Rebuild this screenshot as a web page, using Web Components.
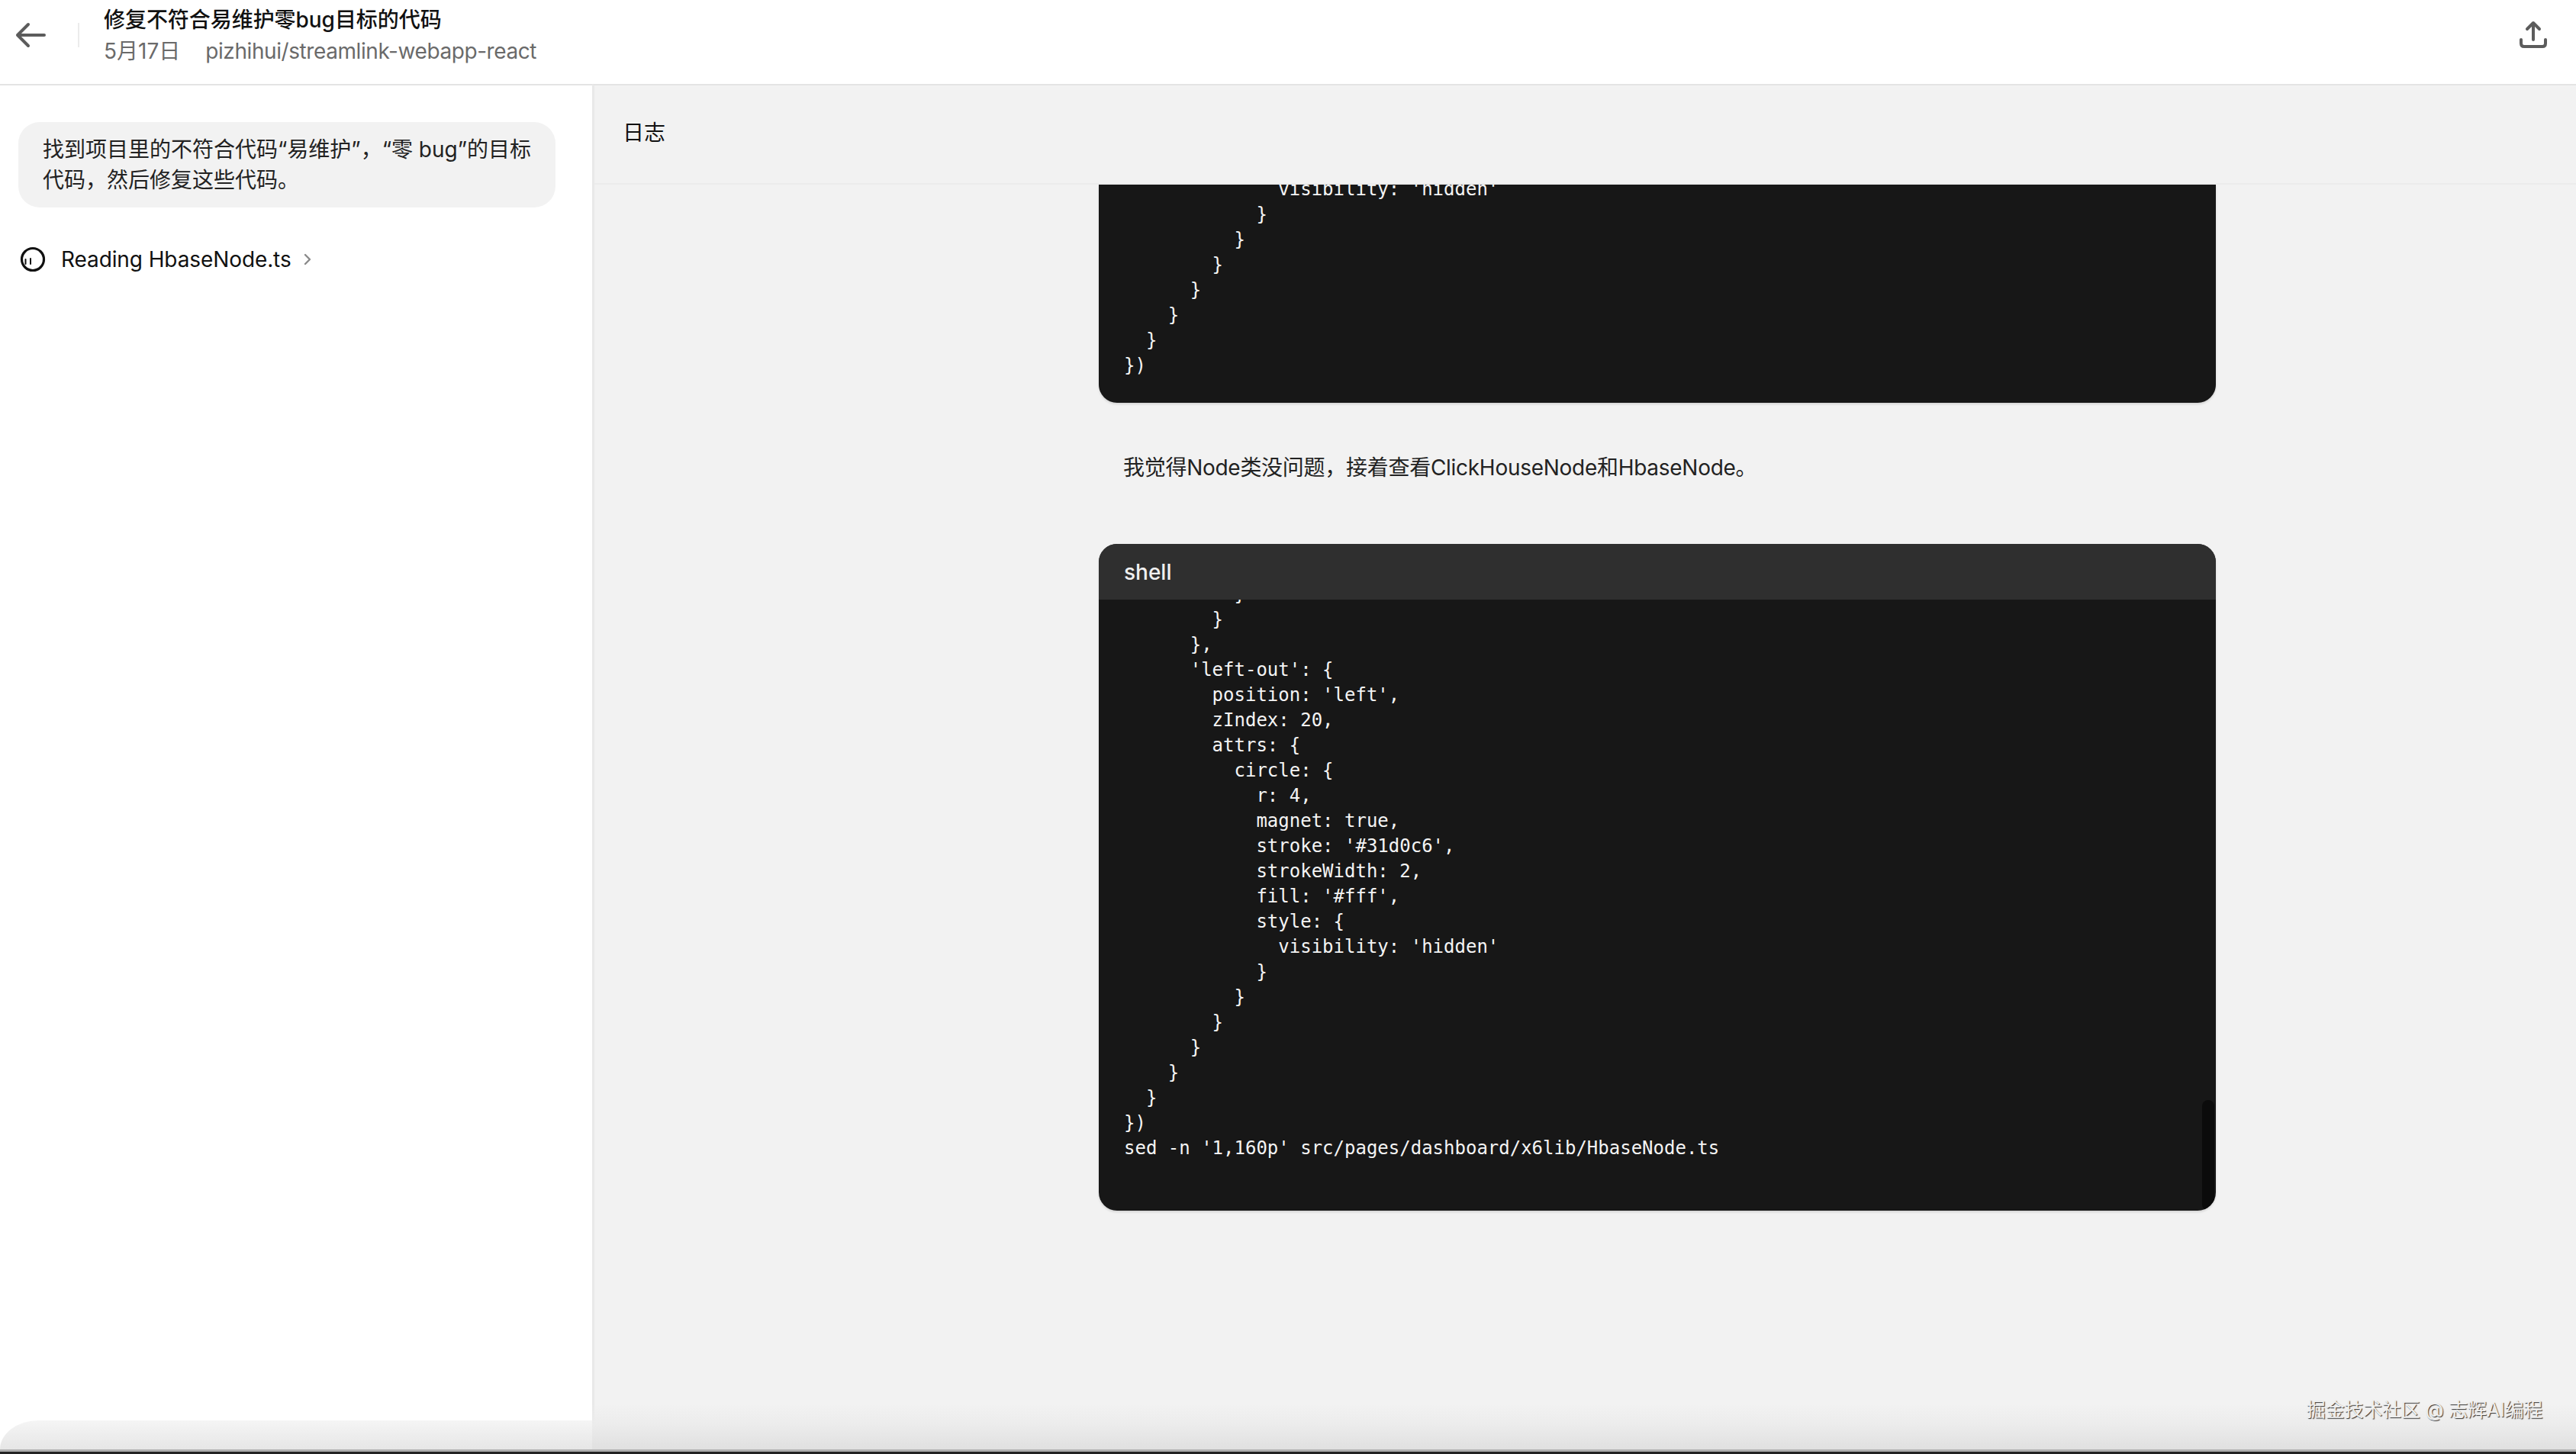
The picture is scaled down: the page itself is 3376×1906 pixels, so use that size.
<!DOCTYPE html>
<html lang="zh">
<head>
<meta charset="utf-8">
<title>修复不符合易维护零bug目标的代码</title>
<style>
    html, body {
        margin: 0;
        height: 100%;
        overflow: hidden;
    }
    body {
        font-family: Inter, "Noto Sans CJK SC", sans-serif;
        font-size: 28px;
        color: #111;
        background: #fff;
    }
</style>
</head>
<body>
<task-page>
    <task-header slot="header" title="修复不符合易维护零bug目标的代码" date="5月17日" repo="pizhihui/streamlink-webapp-react"></task-header>
    <task-sidebar slot="side">
        <user-bubble>找到项目里的不符合代码“易维护”，“零 bug”的目标代码，然后修复这些代码。</user-bubble>
        <step-row>Reading HbaseNode.ts</step-row>
    </task-sidebar>
    <log-panel slot="main" heading="日志">
        <code-block id="first" hang="10"></code-block>
        <log-note>我觉得Node类没问题，接着查看ClickHouseNode和HbaseNode。</log-note>
        <code-block id="second" label="shell" hang="23" thumb></code-block>
    </log-panel>
    <dock-shade slot="shade">掘金技术社区 @ 志辉AI编程</dock-shade>
</task-page>

<script>
const firstLines = [
    "              visibility: 'hidden'",
    "            }",
    "          }",
    "        }",
    "      }",
    "    }",
    "  }",
    "})"
]
const secondLines = [
    "          }",
    "        }",
    "      },",
    "      'left-out': {",
    "        position: 'left',",
    "        zIndex: 20,",
    "        attrs: {",
    "          circle: {",
    "            r: 4,",
    "            magnet: true,",
    "            stroke: '#31d0c6',",
    "            strokeWidth: 2,",
    "            fill: '#fff',",
    "            style: {",
    "              visibility: 'hidden'",
    "            }",
    "          }",
    "        }",
    "      }",
    "    }",
    "  }",
    "})",
    "sed -n '1,160p' src/pages/dashboard/x6lib/HbaseNode.ts"
]

class TaskPage extends HTMLElement {
    constructor() {
        super()
        const shadow = this.attachShadow({ mode: 'open' })
        shadow.innerHTML = `
        <style>
            :host {
                display: grid;
                grid-template-columns: 776px 1fr;
                grid-template-rows: 110px 1fr;
                height: 1906px;
                position: relative;
                overflow: hidden;
            }
            .head { grid-column: 1 / 3; }
        </style>
        <div class="head"><slot name="header"></slot></div>
        <slot name="side"></slot>
        <slot name="main"></slot>
        <slot name="shade"></slot>
        `
    }
}
customElements.define('task-page', TaskPage)

class TaskHeader extends HTMLElement {
    constructor() {
        super()
        const shadow = this.attachShadow({ mode: 'open' })
        shadow.innerHTML = `
        <style>
            :host {
                display: flex;
                align-items: center;
                height: 110px;
                box-sizing: border-box;
                background: #fff;
            }
            .back {
                width: 40px;
                height: 34px;
                margin: -18px 0 0 20px;
                flex: none;
            }
            .rule {
                width: 2px;
                height: 32px;
                margin: -18px 32px 0 42px;
                background: #ececec;
                flex: none;
            }
            .text { flex: 1; display: flex; flex-direction: column; gap: 4px; margin-top: -16px; }
            .title { font-size: 28px; line-height: 36px; font-weight: 500; color: #111; letter-spacing: -.05px; }
            .sub { font-size: 28px; line-height: 38px; color: #6a6a6a; display: flex; gap: 33px; }
            .repo { letter-spacing: -.42px; }
            .share { width: 38px; height: 38px; margin: -19px 37px 0 0; flex: none; }
        </style>
        <svg class="back" viewBox="0 0 40 34" fill="none" stroke="#5c5c5c" stroke-width="4" stroke-linecap="round" stroke-linejoin="round">
            <path d="M3 17H38M17 3 3 17 17 31"/>
        </svg>
        <div class="rule"></div>
        <div class="text">
            <div class="title">${this.getAttribute('title')}</div>
            <div class="sub"><span>${this.getAttribute('date')}</span><span class="repo">${this.getAttribute('repo')}</span></div>
        </div>
        <svg class="share" viewBox="0 0 38 38" fill="none" stroke="#5c5c5c" stroke-width="4" stroke-linecap="round" stroke-linejoin="round">
            <path d="M19 25V3M11 11 19 3 27 11M3 25V30Q3 34 7 34H31Q35 34 35 30V25"/>
        </svg>
        `
    }
}
customElements.define('task-header', TaskHeader)

class TaskSidebar extends HTMLElement {
    constructor() {
        super()
        const shadow = this.attachShadow({ mode: 'open' })
        shadow.innerHTML = `
        <style>
            :host {
                display: flex;
                flex-direction: column;
                gap: 48px;
                box-sizing: border-box;
                padding: 48px 48px 0 24px;
                background: #fff;
                border-top: 2px solid #e4e4e4;
            }
        </style>
        <slot></slot>
        `
    }
}
customElements.define('task-sidebar', TaskSidebar)

class UserBubble extends HTMLElement {
    constructor() {
        super()
        const shadow = this.attachShadow({ mode: 'open' })
        shadow.innerHTML = `
        <style>
            :host {
                display: block;
                padding: 16px 24px 16px 32px;
                background: #f2f2f2;
                border-radius: 28px;
                font-size: 28px;
                line-height: 40px;
                color: #222;
            }
        </style>
        <slot></slot>
        `
    }
}
customElements.define('user-bubble', UserBubble)

class StepRow extends HTMLElement {
    constructor() {
        super()
        const shadow = this.attachShadow({ mode: 'open' })
        shadow.innerHTML = `
        <style>
            :host {
                display: flex;
                align-items: center;
                height: 40px;
                margin-left: 2px;
                font-size: 28px;
                letter-spacing: -.1px;
                color: #111;
            }
            .spin { width: 34px; height: 34px; flex: none; margin-right: 20px; }
            .more { width: 12px; height: 16px; flex: none; margin-left: 15px; }
        </style>
        <svg class="spin" viewBox="0 0 34 34" fill="none" stroke="#111">
            <circle cx="17" cy="17" r="14.5" stroke-width="3.2"/>
            <path d="M7.5 17V23M14 16V23" stroke-width="2" stroke-linecap="round"/>
        </svg>
        <slot></slot>
        <svg class="more" viewBox="0 0 12 16" fill="none" stroke="#8a8a8a" stroke-width="2.4" stroke-linecap="round" stroke-linejoin="round">
            <path d="M3 2 9 8 3 14"/>
        </svg>
        `
    }
}
customElements.define('step-row', StepRow)

class LogPanel extends HTMLElement {
    constructor() {
        super()
        const shadow = this.attachShadow({ mode: 'open' })
        shadow.innerHTML = `
        <style>
            :host {
                display: flex;
                flex-direction: column;
                min-height: 0;
                background: #f2f2f2;
                border-top: 2px solid #e4e4e4;
                border-left: 3px solid #e9e9e9;
            }
            .bar {
                height: 130px;
                flex: none;
                box-sizing: border-box;
                padding: 0 0 8px 37px;
                display: flex;
                align-items: center;
                font-size: 28px;
                color: #111;
                border-bottom: 2px solid #ececec;
            }
            .scroll {
                flex: 1;
                min-height: 0;
                overflow: hidden;
                padding: 0 472px 0 661px;
                display: flex;
                flex-direction: column;
            }
        </style>
        <div class="bar">${this.getAttribute('heading')}</div>
        <div class="scroll"><slot></slot></div>
        `
    }
}
customElements.define('log-panel', LogPanel)

class CodeBlock extends HTMLElement {
    constructor() {
        super()
        this.attachShadow({ mode: 'open' })
    }
    set lines(list) {
        const label = this.getAttribute('label')
        const hang = this.getAttribute('hang') || 0
        this.shadowRoot.innerHTML = `
        <style>
            :host {
                display: block;
                flex: none;
                position: relative;
                background: #171717;
                border-radius: 0 0 24px 24px;
                overflow: hidden;
                box-shadow: 0 2px 3px rgba(0, 0, 0, .12);
            }
            :host([label]) { border-radius: 24px; }
            .label {
                height: 73px;
                box-sizing: border-box;
                padding-left: 33px;
                display: flex;
                align-items: center;
                background: #2f2f2f;
                color: #f0f0f0;
                font-size: 28px;
                font-weight: 500;
                position: relative;
            }
            .body { overflow: hidden; }
            pre {
                margin: -${hang}px 0 0;
                padding: 0 33px 32px;
                font-family: "DejaVu Sans Mono", monospace;
                font-size: 24px;
                line-height: 33px;
                color: #f4f4f4;
            }
            :host([label]) pre { padding-bottom: 65px; }
            .thumb {
                position: absolute;
                right: 2px;
                bottom: 0;
                width: 16px;
                height: 145px;
                border-radius: 8px;
                background: #0b0b0b;
            }
        </style>
        ${label ? `<div class="label">${label}</div>` : ''}
        <div class="body"><pre></pre></div>
        ${this.hasAttribute('thumb') ? '<div class="thumb"></div>' : ''}
        `
        this.shadowRoot.querySelector('pre').textContent = list.join('\n')
    }
}
customElements.define('code-block', CodeBlock)

class LogNote extends HTMLElement {
    constructor() {
        super()
        const shadow = this.attachShadow({ mode: 'open' })
        shadow.innerHTML = `
        <style>
            :host {
                display: block;
                flex: none;
                padding: 65px 32px 80px;
                font-size: 28px;
                line-height: 40px;
                letter-spacing: -.28px;
                color: #222;
            }
        </style>
        <slot></slot>
        `
    }
}
customElements.define('log-note', LogNote)

class DockShade extends HTMLElement {
    constructor() {
        super()
        const shadow = this.attachShadow({ mode: 'open' })
        shadow.innerHTML = `
        <style>
            :host {
                position: absolute;
                left: 0;
                right: 0;
                bottom: 0;
                height: 90px;
                display: block;
                pointer-events: none;
            }
            .left {
                position: absolute;
                left: 0;
                width: 776px;
                bottom: 6px;
                height: 38px;
                border-radius: 50px 0 0 0 / 38px 0 0 0;
                background: linear-gradient(#f5f5f5, #e6e6e6);
            }
            .right {
                position: absolute;
                left: 776px;
                right: 0;
                bottom: 6px;
                height: 60px;
                background: linear-gradient(rgba(242, 242, 242, 0) 0, #ececec 45%, #e0e0e0 100%);
            }
            .line {
                position: absolute;
                left: 0;
                right: 0;
                bottom: 0;
                height: 6px;
                background: linear-gradient(#aeaeae 0 3px, #222 3px);
            }
            .mark {
                position: absolute;
                right: 44px;
                bottom: 42px;
                font-family: Inter, "Noto Sans CJK SC", sans-serif;
                font-size: 25px;
                line-height: 32px;
                letter-spacing: -.2px;
                color: #f0f0f0;
                text-shadow: 1px 1px 1px #333;
            }
        </style>
        <div class="left"></div>
        <div class="right"></div>
        <div class="line"></div>
        <div class="mark"><slot></slot></div>
        `
    }
}
customElements.define('dock-shade', DockShade)

document.getElementById('first').lines = firstLines
document.getElementById('second').lines = secondLines
</script>
</body>
</html>
